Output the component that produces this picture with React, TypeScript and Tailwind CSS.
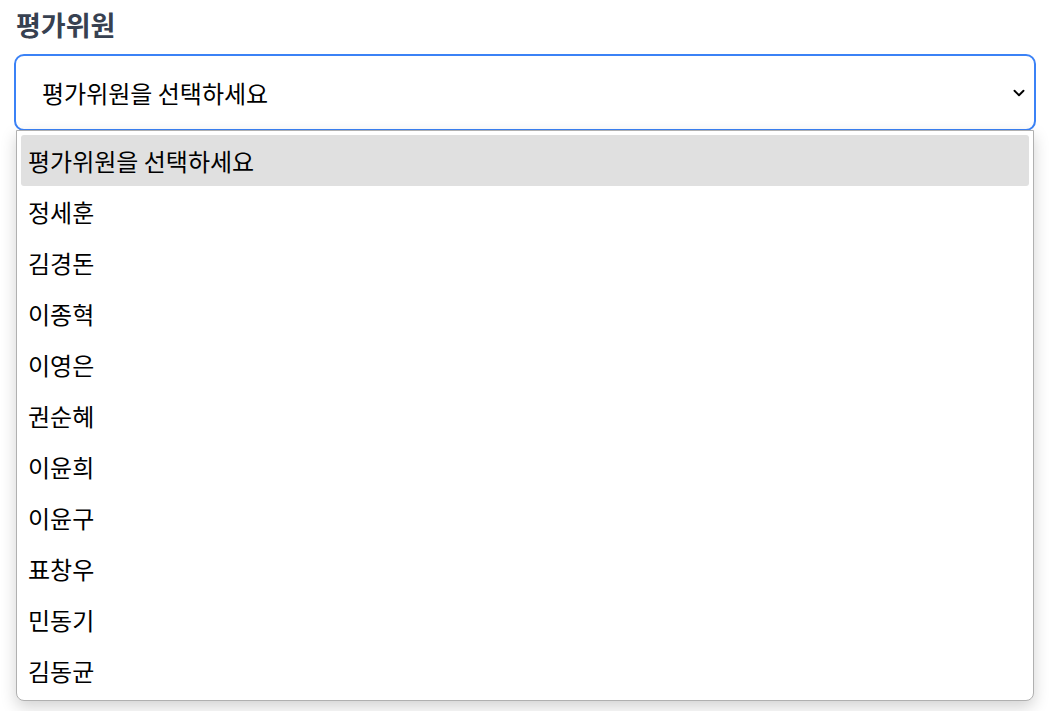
import { ChevronDown } from "lucide-react";

const names = ["정세훈", "김경돈", "이종혁", "이영은", "권순혜", "이윤희", "이윤구", "표창우", "민동기", "김동균"];

export default function App() {
  return (
    <div
      className="h-[711px] w-[1050px] overflow-hidden bg-white px-[14px] pt-[6px]"
      style={{ fontFamily: '"Noto Sans CJK KR", "Noto Sans", sans-serif' }}
    >
      <div className="mb-[10px] ml-[2px] text-[27px] font-bold leading-[38px] text-[#374151]">평가위원</div>

      <div className="relative">
        {/* select box */}
        <div className="flex h-[77px] w-[1022px] items-center justify-between rounded-[10px] border-2 border-[#3b82f6] bg-white pl-[26px] pr-[6px]">
          <span className="text-[24px] text-black">평가위원을 선택하세요</span>
          <ChevronDown size={18} strokeWidth={2.5} className="text-black" />
        </div>

        {/* open list */}
        <div className="absolute left-[2px] top-[76px] w-[1018px] rounded-b-[8px] border border-[#b0b0b0] bg-white px-[4px] pt-[4px] pb-[4px] shadow-[0_6px_16px_rgba(0,0,0,0.18)]">
          <div className="flex h-[51px] items-center rounded-[3px] bg-[#e0e0e0] px-[7px] text-[24px] text-black">
            평가위원을 선택하세요
          </div>
          {names.map((n) => (
            <div key={n} className="flex h-[51px] items-center px-[7px] text-[24px] text-black">
              {n}
            </div>
          ))}
        </div>
      </div>
    </div>
  );
}
